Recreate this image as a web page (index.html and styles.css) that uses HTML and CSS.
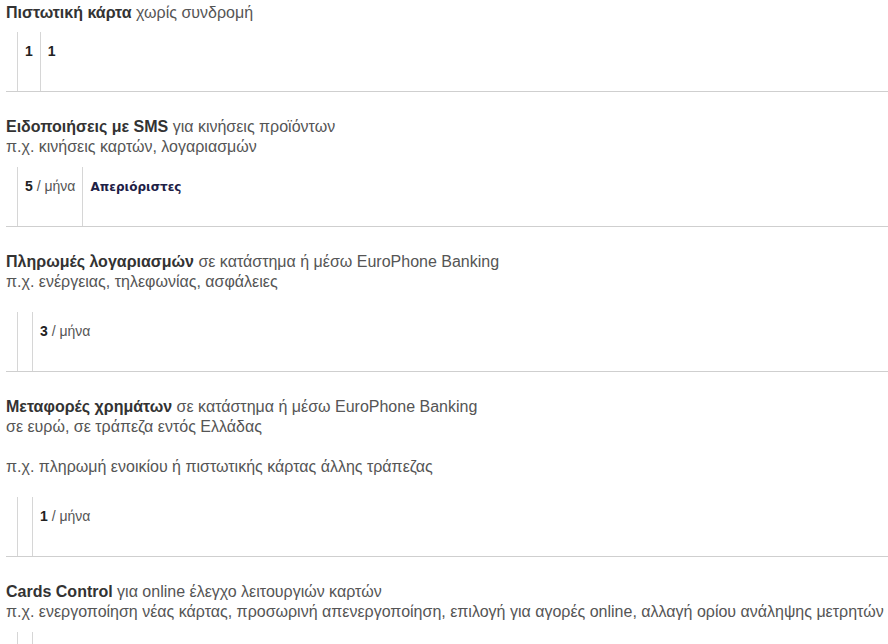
FILE: index.html
```html
<!DOCTYPE html>
<html lang="el">
<head>
<meta charset="utf-8">
<title>Παροχές</title>
<link rel="stylesheet" href="styles.css">
</head>
<body>
<div class="list">
  <section class="item item-first">
    <p class="desc"><strong>Πιστωτική κάρτα</strong> χωρίς συνδρομή</p>
    <div class="cells">
      <div class="cell"><b class="num">1</b></div>
      <div class="cell"><b class="num">1</b></div>
    </div>
  </section>

  <section class="item">
    <p class="desc"><strong>Ειδοποιήσεις με SMS</strong> για κινήσεις προϊόντων<br>π.χ. κινήσεις καρτών, λογαριασμών</p>
    <div class="cells">
      <div class="cell"><b class="num">5</b> <span class="unit">/ μήνα</span></div>
      <div class="cell"><b class="unlimited">Απεριόριστες</b></div>
    </div>
  </section>

  <section class="item">
    <p class="desc"><strong>Πληρωμές λογαριασμών</strong> σε κατάστημα ή μέσω EuroPhone Banking<br>π.χ. ενέργειας, τηλεφωνίας, ασφάλειες</p>
    <div class="cells cells-spaced">
      <div class="cell cell-empty"></div>
      <div class="cell"><b class="num">3</b> <span class="unit">/ μήνα</span></div>
    </div>
  </section>

  <section class="item">
    <p class="desc"><strong>Μεταφορές χρημάτων</strong> σε κατάστημα ή μέσω EuroPhone Banking<br>σε ευρώ, σε τράπεζα εντός Ελλάδας<br><br>π.χ. πληρωμή ενοικίου ή πιστωτικής κάρτας άλλης τράπεζας</p>
    <div class="cells cells-spaced">
      <div class="cell cell-empty"></div>
      <div class="cell"><b class="num">1</b> <span class="unit">/ μήνα</span></div>
    </div>
  </section>

  <section class="item">
    <p class="desc"><strong>Cards Control</strong> για online έλεγχο λειτουργιών καρτών<br>π.χ. ενεργοποίηση νέας κάρτας, προσωρινή απενεργοποίηση, επιλογή για αγορές online, αλλαγή ορίου ανάληψης μετρητών</p>
    <div class="cells">
      <div class="cell cell-empty"></div>
      <div class="cell"></div>
    </div>
  </section>
</div>
</body>
</html>
```
FILE: styles.css
```css
html, body {
  margin: 0;
  padding: 0;
  background: #fff;
}

body {
  font-family: "Liberation Sans", Arial, sans-serif;
  font-size: 16px;
  line-height: 20px;
  color: #555;
  overflow: hidden;
}

.list {
  margin-left: 6px;
}

.item {
  padding-top: 25px;
  border-bottom: 1px solid #cfcfcf;
}

.item-first {
  padding-top: 3px;
}

.desc {
  margin: 0;
  white-space: nowrap;
}

.desc strong {
  color: #333;
  font-weight: bold;
}

.cells {
  display: flex;
  margin: 10px 0 0 11px;
  height: 59px;
}

.item-first .cells {
  margin-top: 9px;
}

.cells-spaced {
  margin-top: 20px;
}

.cell {
  border-left: 1px solid #d6d6d6;
  padding: 11px 7px 0;
  font-size: 14px;
  line-height: 16px;
  white-space: nowrap;
}

.cell-empty {
  padding: 0 7px;
}

.num {
  color: #222;
  font-weight: bold;
}

.unit {
  color: #555;
}

.unlimited {
  font-family: "DejaVu Sans", Verdana, sans-serif;
  font-size: 12px;
  font-weight: bold;
  color: #1d2146;
}
```
